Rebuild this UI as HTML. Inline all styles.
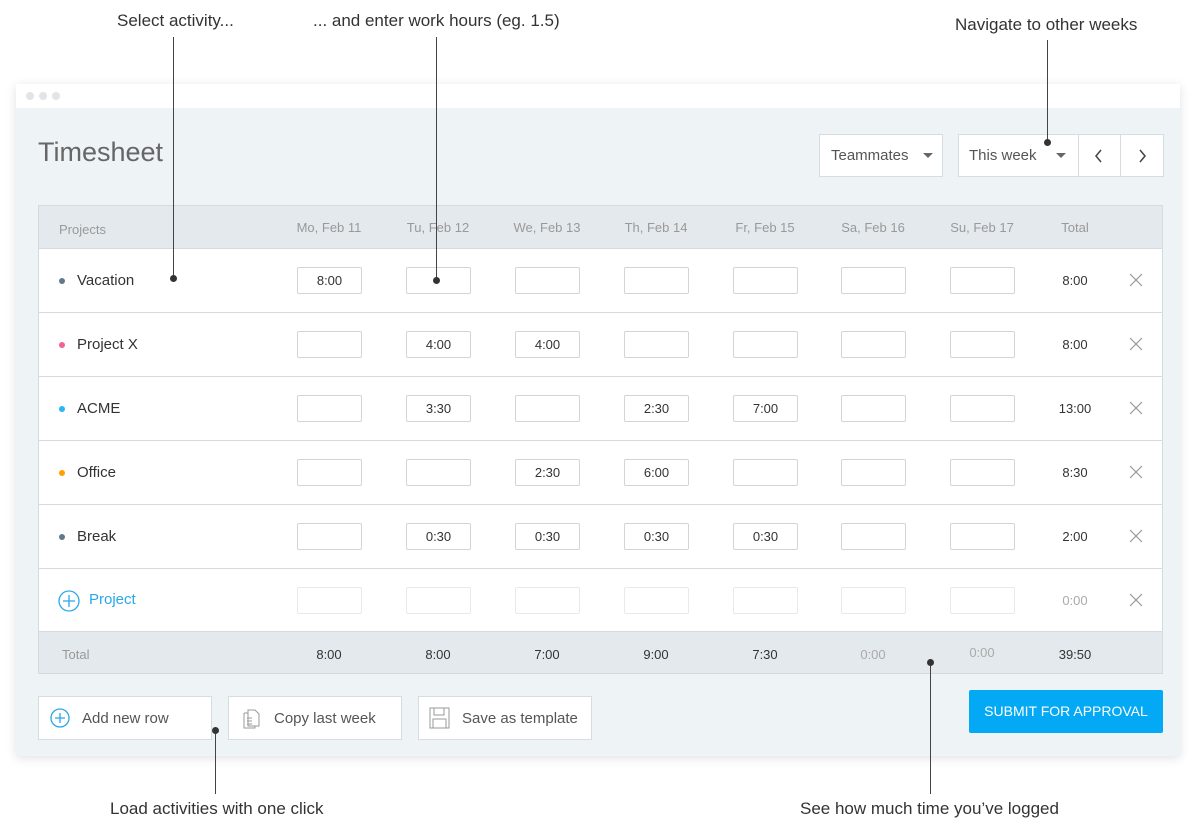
<!DOCTYPE html>
<html><head><style>
*{box-sizing:border-box;margin:0;padding:0}
body{width:1200px;height:832px;background:#fff;font-family:"Liberation Sans",Arial,sans-serif;position:relative;overflow:hidden;color:#333}
.abs{position:absolute}
.win{left:16px;top:84px;width:1164px;height:672px;background:#eef3f6;box-shadow:0 2px 10px rgba(0,0,0,.12)}
.bar{left:0;top:0;width:1164px;height:24px;background:#fff}
.dot{width:8px;height:8px;border-radius:50%;background:#e1e5e8;top:8px}
.btn{background:#fff;border:1px solid #d6dde2;font-size:15px;color:#555;display:flex;align-items:center}
.tbl{left:38px;top:205px;width:1125px;height:469px;border:1px solid #d3dbe0;background:#fff}
.hd{left:0;width:1123px;background:#e4e9ed;font-size:13px;color:#999}
.row{left:0;width:1123px;height:64px;border-top:1px solid #d3dbe0}
.c{position:absolute;transform:translateX(-50%);text-align:center;white-space:nowrap}
.in{position:absolute;width:65px;height:27px;border:1px solid #cfd6db;border-radius:2px;top:18px;font-size:13px;text-align:center;line-height:25px;color:#333}
.nm{position:absolute;left:38px;top:23px;font-size:15px;color:#333}
.bd{position:absolute;left:20px;top:29px;width:6px;height:6px;border-radius:50%}
.x{position:absolute;left:1090px;top:24px}
.ann{font-size:17px;color:#333;white-space:nowrap}
.ln{width:1px;background:#444}
.pt{width:7px;height:7px;border-radius:50%;background:#333}
</style></head><body>
<div class="abs win">
<div class="abs bar"></div>
<div class="abs dot" style="left:10px"></div><div class="abs dot" style="left:23px"></div><div class="abs dot" style="left:36px"></div>
<div class="abs" style="left:22px;top:53px;font-size:27px;color:#666">Timesheet</div>
<div class="abs btn" style="left:803px;top:50px;width:124px;height:43px;padding-left:11px">Teammates<svg style="margin-left:14px" width="10" height="6"><path d="M0 0h10L5 5z" fill="#666"/></svg></div>
<div class="abs btn" style="left:942px;top:50px;width:206px;height:43px;padding-left:10px">This week<svg style="margin-left:19px" width="10" height="6"><path d="M0 0h10L5 5z" fill="#666"/></svg>
<div class="abs" style="left:119px;top:0;width:1px;height:41px;background:#d6dde2"></div>
<div class="abs" style="left:161px;top:0;width:1px;height:41px;background:#d6dde2"></div>
<svg class="abs" style="left:135px;top:14px" width="10" height="14"><path d="M7 1L2 7l5 6" fill="none" stroke="#444" stroke-width="1.5"/></svg>
<svg class="abs" style="left:178px;top:14px" width="10" height="14"><path d="M3 1l5 6-5 6" fill="none" stroke="#444" stroke-width="1.5"/></svg>
</div>
</div>
<div class="abs tbl">
<div class="abs hd" style="top:0;height:42px">
<span class="abs" style="left:20px;top:16px">Projects</span>
<span class="c" style="left:290px;top:14px">Mo, Feb 11</span><span class="c" style="left:399px;top:14px">Tu, Feb 12</span><span class="c" style="left:508px;top:14px">We, Feb 13</span><span class="c" style="left:617px;top:14px">Th, Feb 14</span><span class="c" style="left:726px;top:14px">Fr, Feb 15</span><span class="c" style="left:834px;top:14px">Sa, Feb 16</span><span class="c" style="left:943px;top:14px">Su, Feb 17</span><span class="c" style="left:1036px;top:14px">Total</span>
</div>
<div id="rows"></div>
<div class="abs hd" style="top:425px;height:42px;border-top:1px solid #d3dbe0;color:#333">
<span class="abs" style="left:23px;top:15px;color:#999">Total</span>
<span class="c" style="left:290px;top:15px">8:00</span><span class="c" style="left:399px;top:15px">8:00</span><span class="c" style="left:508px;top:15px">7:00</span><span class="c" style="left:617px;top:15px">9:00</span><span class="c" style="left:726px;top:15px">7:30</span><span class="c" style="left:834px;top:15px;color:#aaa">0:00</span><span class="c" style="left:943px;top:13px;color:#aaa">0:00</span><span class="c" style="left:1036px;top:15px">39:50</span>
</div>
</div>
<div class="abs btn" style="left:38px;top:696px;width:174px;height:44px;padding-left:11px"><svg width="20" height="20"><circle cx="10" cy="10" r="9" fill="none" stroke="#29a8e8" stroke-width="1.3"/><path d="M10 5v10M5 10h10" stroke="#29a8e8" stroke-width="1.3"/></svg><span style="margin-left:12px">Add new row</span></div>
<div class="abs btn" style="left:228px;top:696px;width:174px;height:44px;padding-left:12px"><svg width="22" height="24"><path d="M7 4h7l4 4v12h-11z" fill="none" stroke="#999"/><path d="M3 7h4M3 7v15h11v-2" fill="none" stroke="#999"/><path d="M6 12h5M6 15h5M6 18h5" stroke="#999"/></svg><span style="margin-left:11px">Copy last week</span></div>
<div class="abs btn" style="left:418px;top:696px;width:174px;height:44px;padding-left:10px"><svg width="22" height="24"><rect x="1" y="2" width="19" height="20" fill="none" stroke="#999"/><rect x="5" y="2" width="10" height="7" fill="none" stroke="#999"/><rect x="4" y="13" width="13" height="9" fill="none" stroke="#999"/></svg><span style="margin-left:11px">Save as template</span></div>
<div class="abs" style="left:969px;top:690px;width:194px;height:43px;background:#03a9f4;color:#fff;font-size:14px;text-align:center;line-height:43px;border-radius:2px">SUBMIT FOR APPROVAL</div>

<div class="abs ann" style="left:117px;top:11px">Select activity...</div>
<div class="abs ann" style="left:313px;top:11px">... and enter work hours (eg. 1.5)</div>
<div class="abs ann" style="left:955px;top:15px">Navigate to other weeks</div>
<div class="abs ann" style="left:110px;top:799px">Load activities with one click</div>
<div class="abs ann" style="left:800px;top:799px">See how much time you’ve logged</div>
<div class="abs ln" style="left:173px;top:37px;height:241px"></div><div class="abs pt" style="left:170px;top:275px"></div>
<div class="abs ln" style="left:436px;top:37px;height:243px"></div><div class="abs pt" style="left:433px;top:277px"></div>
<div class="abs ln" style="left:1047px;top:40px;height:102px"></div><div class="abs pt" style="left:1044px;top:139px"></div>
<div class="abs ln" style="left:215px;top:730px;height:64px"></div><div class="abs pt" style="left:212px;top:727px"></div>
<div class="abs ln" style="left:930px;top:662px;height:132px"></div><div class="abs pt" style="left:927px;top:659px"></div>
<script>
var R=[["Vacation","#5f7a8c",["8:00","","","","","",""],"8:00"],["Project X","#f06292",["","4:00","4:00","","","",""],"8:00"],["ACME","#29b6f6",["","3:30","","2:30","7:00","",""],"13:00"],["Office","#ffa000",["","","2:30","6:00","","",""],"8:30"],["Break","#5f7a8c",["","0:30","0:30","0:30","0:30","",""],"2:00"]];
var X=[258,367,476,585,694,802,911],h="";
R.forEach(function(r,i){h+='<div class="abs row" style="top:'+(42+i*64)+'px"><div class="bd" style="background:'+r[1]+'"></div><div class="nm">'+r[0]+'</div>';
r[2].forEach(function(v,j){h+='<div class="in" style="left:'+X[j]+'px">'+v+'</div>'});
h+='<span class="c" style="left:1036px;top:24px;font-size:13px">'+r[3]+'</span><svg class="x" width="14" height="14"><path d="M1 1l12 12M13 1L1 13" stroke="#999" stroke-width="1.2"/></svg></div>'});
h+='<div class="abs row" style="top:362px"><svg style="position:absolute;left:19px;top:21px" width="22" height="22"><circle cx="11" cy="11" r="10" fill="none" stroke="#29a8e8" stroke-width="1.3"/><path d="M11 5v12M5 11h12" stroke="#29a8e8" stroke-width="1.3"/></svg><div class="nm" style="left:50px;top:22px;color:#29a8e8">Project</div>';
X.forEach(function(x){h+='<div class="in" style="left:'+x+'px;border-color:#e6eaed"></div>'});
h+='<span class="c" style="left:1036px;top:24px;font-size:13px;color:#aaa">0:00</span><svg class="x" width="14" height="14"><path d="M1 1l12 12M13 1L1 13" stroke="#999" stroke-width="1.2"/></svg></div>';
document.getElementById('rows').innerHTML=h;
</script>
</body></html>
